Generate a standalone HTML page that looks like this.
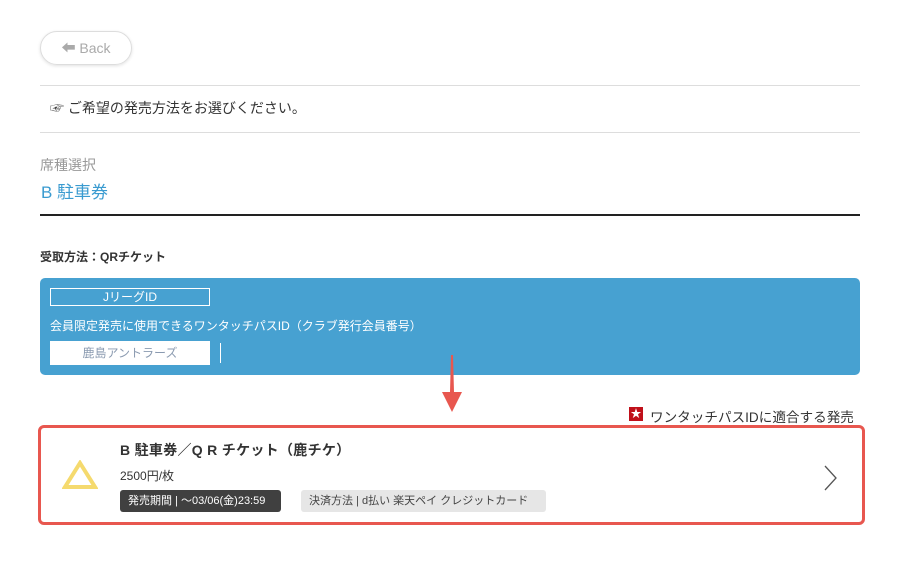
<!DOCTYPE html>
<html><head><meta charset="utf-8"><style>
*{margin:0;padding:0;box-sizing:border-box}
body{width:900px;height:563px;background:#fff;font-family:"Liberation Sans","Noto Sans CJK JP",sans-serif;color:#333;position:relative;overflow:hidden}
.a{position:absolute;white-space:nowrap}
</style></head><body>
<div class="a" style="left:40px;top:31px;width:92px;height:34px;border:1px solid #ddd;border-radius:17px;box-shadow:0 1px 3px rgba(0,0,0,.12);color:#aaa;font-size:14px;line-height:32px;text-align:center">⬅ Back</div>
<div class="a" style="left:40px;top:85px;width:820px;height:1px;background:#ddd"></div>
<div class="a" style="left:50px;top:99px;font-size:14px;line-height:18px;color:#333">☞ ご希望の発売方法をお選びください。</div>
<div class="a" style="left:40px;top:132px;width:820px;height:1px;background:#ddd"></div>
<div class="a" style="left:40px;top:155px;font-size:14px;color:#999">席種選択</div>
<div class="a" style="left:41px;top:178px;font-size:17px;color:#3a9bd0">B 駐車券</div>
<div class="a" style="left:40px;top:214px;width:820px;height:2px;background:#222"></div>
<div class="a" style="left:40px;top:248px;font-size:12px;font-weight:bold;color:#333">受取方法：QRチケット</div>
<div class="a" style="left:40px;top:278px;width:820px;height:97px;background:#47a1d1;border-radius:5px"></div>
<div class="a" style="left:50px;top:288px;width:160px;height:18px;border:1px solid #fff;color:#fff;font-size:12px;line-height:16px;text-align:center">JリーグID</div>
<div class="a" style="left:50px;top:317px;color:#fff;font-size:12px">会員限定発売に使用できるワンタッチパスID（クラブ発行会員番号）</div>
<div class="a" style="left:50px;top:341px;width:160px;height:24px;background:#fff;color:#8a9ab0;font-size:12px;line-height:24px;text-align:center">鹿島アントラーズ</div>
<div class="a" style="left:220px;top:343px;width:1px;height:20px;background:#fff"></div>
<svg class="a" style="left:440px;top:354px" width="24" height="60"><polygon points="11,1 13,1 14,38 22,38 12,58 2,38 10,38" fill="#e8574f"/></svg>
<div class="a" style="left:629px;top:407px;width:14px;height:14px;background:#c0101a;color:#fff;font-size:11px;line-height:14px;text-align:center">★</div>
<div class="a" style="left:650px;top:406px;font-size:13.6px;color:#333">ワンタッチパスIDに適合する発売</div>
<div class="a" style="left:38px;top:425px;width:827px;height:100px;border:3px solid #e8574f;border-radius:6px"></div>
<svg class="a" style="left:62px;top:460px" width="36" height="30"><polygon points="18,3 33,27 3,27" fill="none" stroke="#f5da6e" stroke-width="4"/></svg>
<div class="a" style="left:120px;top:440px;font-size:14px;font-weight:bold;color:#333;letter-spacing:0.3px">B 駐車券／Q R チケット（鹿チケ）</div>
<div class="a" style="left:120px;top:467px;font-size:12px;color:#333">2500円/枚</div>
<div class="a" style="left:120px;top:490px;width:161px;height:22px;background:#404040;border-radius:3px;color:#fff;font-size:11px;line-height:22px;padding-left:8px">発売期間 |  〜03/06(金)23:59</div>
<div class="a" style="left:301px;top:490px;width:245px;height:22px;background:#e6e6e6;border-radius:3px;color:#444;font-size:11px;line-height:22px;padding-left:8px">決済方法 |  d払い 楽天ペイ クレジットカード</div>
<svg class="a" style="left:822px;top:464px" width="16" height="28"><polyline points="3,2 14,14 3,26" fill="none" stroke="#555" stroke-width="1.3"/></svg>
</body></html>
